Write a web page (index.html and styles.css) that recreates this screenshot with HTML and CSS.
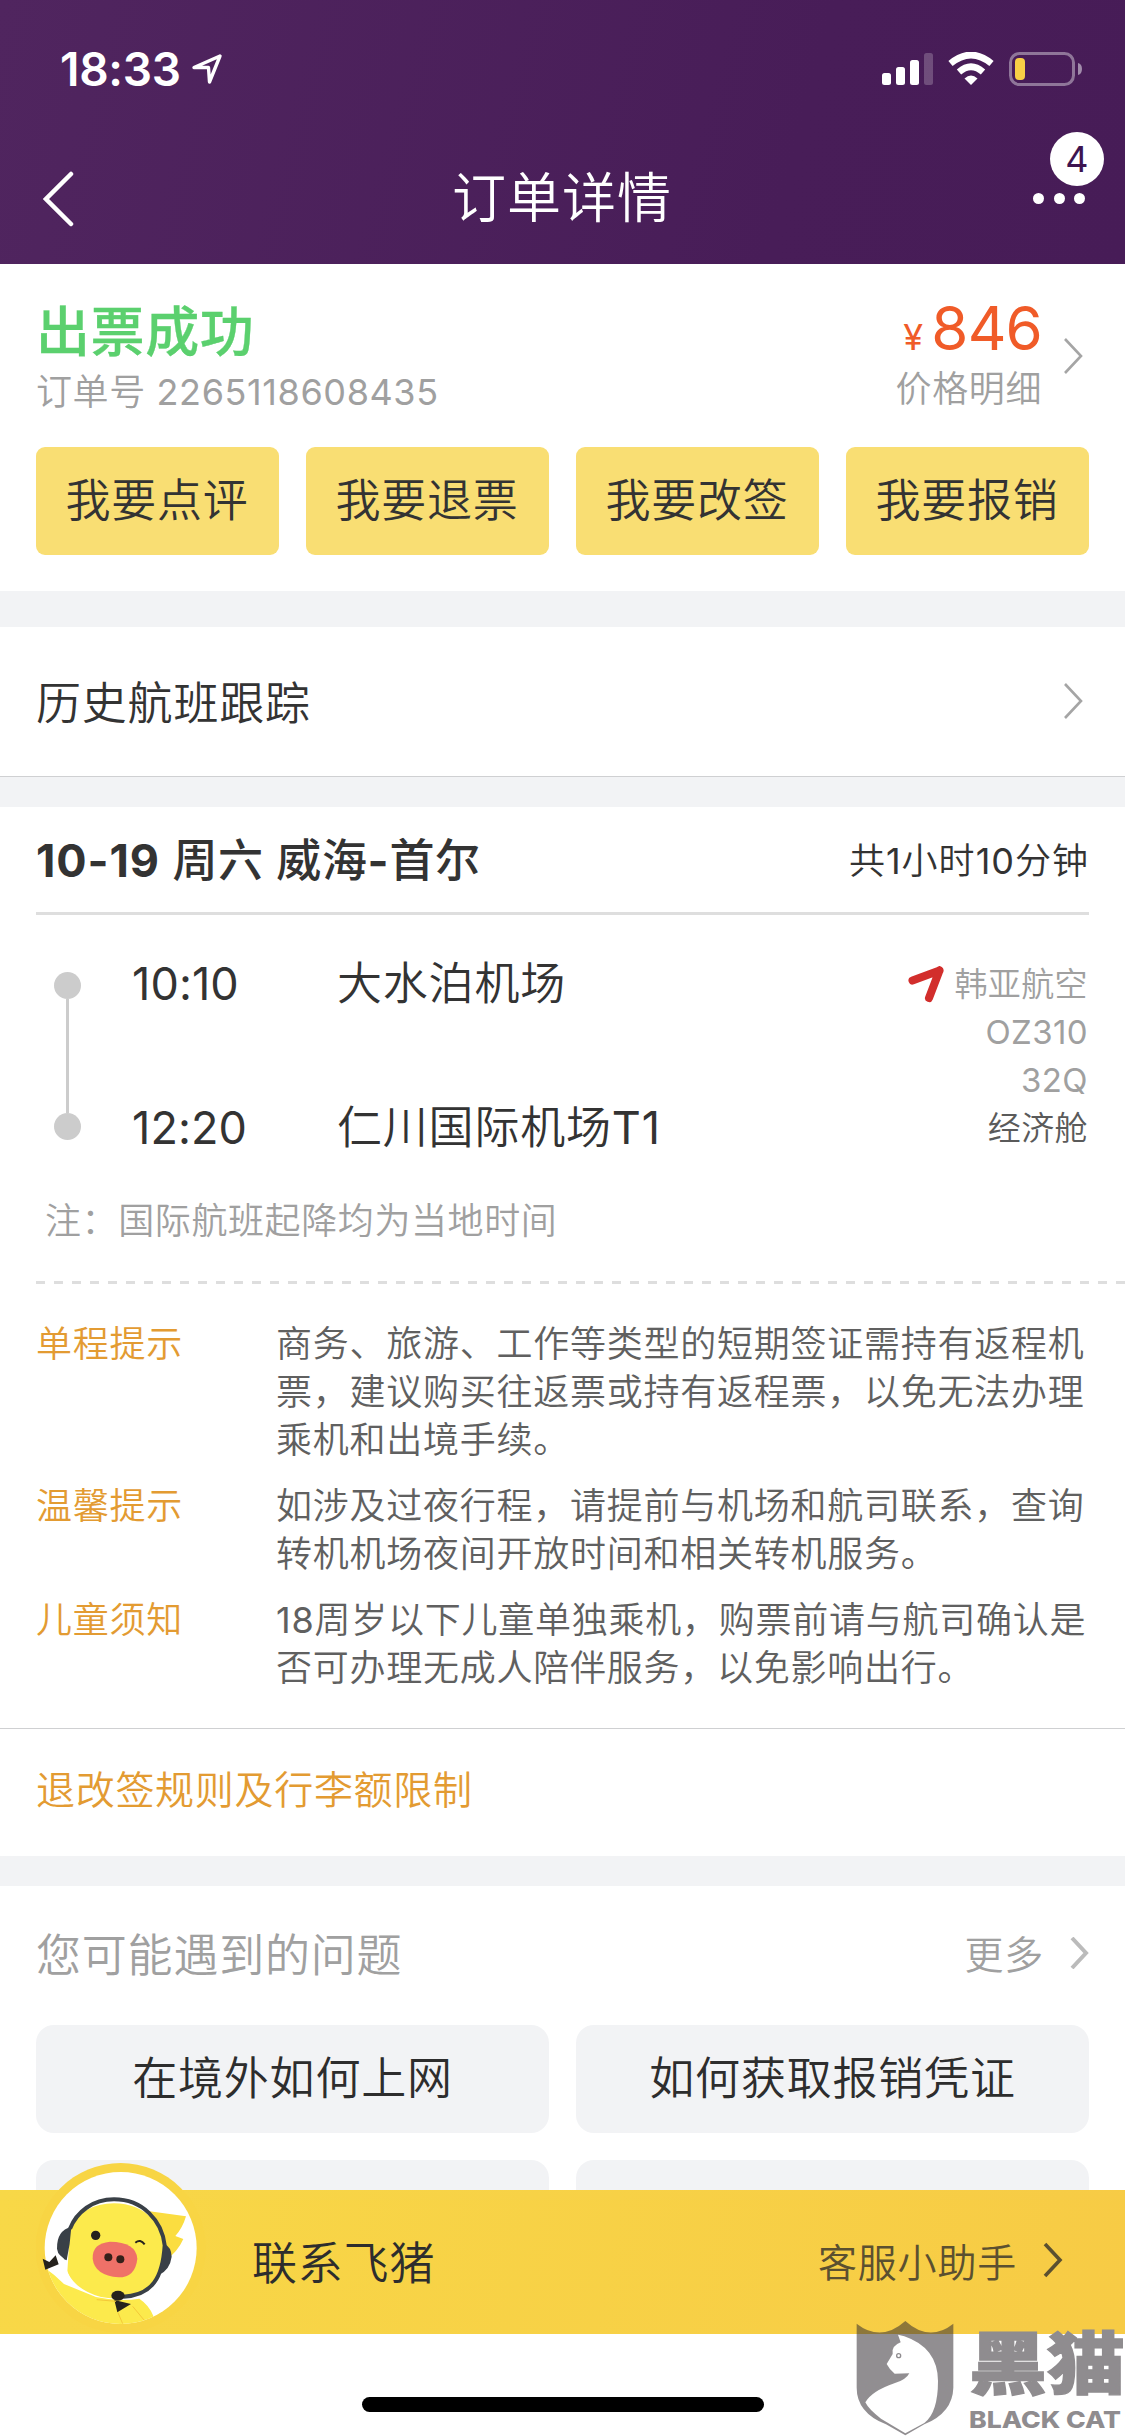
FILE: index.html
```html
<!DOCTYPE html>
<html lang="zh-CN">
<head>
<meta charset="utf-8">
<title>订单详情</title>
<link rel="stylesheet" href="styles.css">
</head>
<body>
<header class="header">
  <div class="status">
    <span class="clock">18:33</span>
    <svg class="loc" width="32" height="32" viewBox="0 0 32 32"><path d="M29 3 3 14.500H17.500L18.500 29Z" fill="none" stroke="#fff" stroke-width="3.400" stroke-linejoin="round"/></svg>
    <svg class="signals" width="202" height="36" viewBox="0 0 202 36">
      <g fill="#fff">
        <rect x="0" y="21" width="9" height="12" rx="2.500"/><rect x="14" y="15" width="9" height="18" rx="2.500"/><rect x="28" y="8" width="9" height="25" rx="2.500"/><rect x="42" y="1" width="9" height="32" rx="2.500" opacity=".22"/>
        <path d="M89 33 82.500 26.500Q89 20.500 95.500 26.500Z"/>
      </g>
      <g fill="none" stroke="#fff" stroke-width="6.600"><path d="M68.500 11.500Q89-5.500 109.500 11.500"/><path d="M77 20Q89 9.500 101 20"/></g>
      <rect x="128.500" y="1.500" width="63" height="31" rx="9" fill="none" stroke="#8f7699" stroke-width="3"/>
      <rect x="133" y="6" width="10" height="22" rx="4" fill="#f8cf46"/>
      <path d="M196 11Q200 12 200 17T196 23Z" fill="#a18cab"/>
    </svg>
  </div>
  <div class="nav">
    <svg class="back" width="32" height="56" viewBox="0 0 32 56"><path d="M28 3 3 28 28 53" fill="none" stroke="#fff" stroke-width="4.500" stroke-linecap="round"/></svg>
    <h1 class="title">订单详情</h1>
    <div class="menu"><i></i><i></i><i></i><span class="badge num">4</span></div>
  </div>
</header>

<section class="order">
  <div class="order-top">
    <div>
      <div class="state">出票成功</div>
      <div class="order-no">订单号 <span class="num">2265118608435</span></div>
    </div>
    <div class="price-box">
      <div class="price"><span class="yen">¥</span>846</div>
      <div class="price-label">价格明细</div>
    </div>
    <svg class="chev chev-price" width="20" height="36" viewBox="0 0 20 36"><path d="M2 1 18 18 2 35"/></svg>
  </div>
  <div class="actions"><a>我要点评</a><a>我要退票</a><a>我要改签</a><a>我要报销</a></div>
</section>

<section class="history">
  <span>历史航班跟踪</span>
  <svg class="chev" width="20" height="36" viewBox="0 0 20 36"><path d="M2 1 18 18 2 35"/></svg>
</section>

<section class="flight">
  <div class="flight-head">
    <h2><b>10-19</b> 周六 威海<b>-</b>首尔</h2>
    <span class="duration">共<span class="num">1</span>小时<span class="num">10</span>分钟</span>
  </div>
  <div class="route">
    <div class="rail"><i></i><b></b><i></i></div>
    <div class="stops">
      <div><span class="time num">10:10</span><span>大水泊机场</span></div>
      <div><span class="time num">12:20</span><span>仁川国际机场<span class="num">T1</span></span></div>
    </div>
    <div class="carrier">
      <div class="airline"><svg width="38" height="38" viewBox="0 0 38 38"><path d="M32.500 5.500 5.500 15.500M32.500 5.500 22 33" fill="none" stroke="#d22e2c" stroke-width="8" stroke-linecap="round" stroke-linejoin="round"/></svg><span>韩亚航空</span></div>
      <div class="num">OZ310</div>
      <div class="num">32Q</div>
      <div class="cabin">经济舱</div>
    </div>
  </div>
  <p class="note">注：国际航班起降均为当地时间</p>
  <div class="dashes"></div>
  <dl class="tips">
    <dt>单程提示</dt><dd>商务、旅游、工作等类型的短期签证需持有返程机<br>票，建议购买往返票或持有返程票，以免无法办理<br>乘机和出境手续。</dd>
    <dt>温馨提示</dt><dd>如涉及过夜行程，请提前与机场和航司联系，查询<br>转机机场夜间开放时间和相关转机服务。</dd>
    <dt>儿童须知</dt><dd><span class="num">18</span>周岁以下儿童单独乘机，购票前请与航司确认是<br>否可办理无成人陪伴服务，以免影响出行。</dd>
  </dl>
  <a class="rules">退改签规则及行李额限制</a>
</section>

<section class="faq">
  <div class="faq-head">
    <span>您可能遇到的问题</span><span class="more">更多</span>
    <svg class="chev chev-bold" width="19" height="32" viewBox="0 0 19 32"><path d="M2 1 16 16 2 31"/></svg>
  </div>
  <div class="faq-grid"><a>在境外如何上网</a><a>如何获取报销凭证</a><a></a><a></a></div>
</section>

<footer class="contact">
  <svg class="avatar" width="172" height="172" viewBox="0 0 516 516">
    <defs><clipPath id="face"><circle cx="254" cy="258" r="228"/></clipPath></defs>
    <circle cx="254" cy="258" r="255" fill="#f8d544"/>
    <circle cx="254" cy="258" r="228" fill="#fff"/>
    <g clip-path="url(#face)">
      <path d="M0 300Q50 330 84 366L180 405Q250 420 310 410Q340 430 352 462L330 516H0Z" fill="#fcea4c"/>
      <path d="M335 147 450 163Q440 198 418 222L442 231Q425 270 388 295Z" fill="#fbdd40"/>
    </g>
    <path d="M102 200Q140 125 234 124C330 124 384 190 382 270Q375 370 318 392Q260 418 195 405Q120 385 94 330Z" fill="#fcea4c"/>
    <path d="M102 200C122 150 170 112 234 112C320 112 378 176 386 250C380 345 350 400 262 404" fill="none" stroke="#394047" stroke-width="12"/>
    <path d="M106 195Q62 205 63 260Q67 286 92 295Q103 245 106 195ZM384 245Q406 254 407 284Q402 322 370 338Q380 290 384 245Z" fill="#394047"/>
    <path d="M64 272Q78 340 123 377Q92 342 84 290Z" fill="#fff"/>
    <path d="M20 290 40 300 59 280 68 307 28 323ZM235 414 285 426 244 451Z" fill="#25221d"/>
    <ellipse cx="246" cy="401" rx="20" ry="15" fill="#25221d"/>
    <circle cx="179" cy="220" r="14" fill="#25221d"/>
    <path d="M298 242Q313 230 326 247" fill="none" stroke="#25221d" stroke-width="6"/>
    <path d="M170 290Q168 244 222 239Q300 240 304 290Q298 346 248 346Q176 340 170 290Z" fill="#ef7168"/>
    <circle cx="217" cy="286" r="12" fill="#35201a"/><circle cx="253" cy="292" r="12" fill="#35201a"/>
    <path d="M182 413 240 418M290 433 324 474M246 452 260 485" stroke="#f4c838" stroke-width="3"/>
  </svg>
  <span class="contact-name">联系飞猪</span>
  <span class="helper">客服小助手</span>
  <svg class="chev chev-dark" width="22" height="36" viewBox="0 0 22 36"><path d="M3 2 18 18 3 34"/></svg>
</footer>
<div class="home"><i></i></div>

<div class="mark">
  <svg width="100" height="115" viewBox="0 0 300 345">
    <path fill-rule="evenodd" d="M2 8Q75 65 148 0Q220 65 292 8V200Q290 275 205 310L148 343 90 310Q2 275 2 200ZM134 64 126 41 145 46Q245 80 246 180Q246 275 205 306L148 337 75 293Q38 265 28 244Q48 210 115 187Q150 177 160 157L116 158Q100 145 92 129L110 99Q105 75 134 64Z"/>
    <circle cx="128" cy="104" r="6" fill="none" stroke="#8f8c8f" stroke-width="4"/>
  </svg>
  <div class="mark-text"><span class="mark-cn">黑猫</span><span class="mark-en">BLACK CAT</span></div>
</div>
</body>
</html>
```
FILE: styles.css
```css
* { box-sizing: border-box; }
body {
  position: relative;
  margin: 0;
  width: 1125px;
  height: 2436px;
  overflow: hidden;
  background: #f2f3f5;
  color: #333;
  font-family: Inter, "Noto Sans CJK SC", sans-serif;
  font-size: 45px;
  font-weight: 350;
  letter-spacing: .8px;
  display: flex;
  flex-direction: column;
}
h1, h2, p, dl, dd { margin: 0; font-weight: inherit; }
section { background: #fff; flex: none; }
i { display: block; }
svg { flex: none; display: block; }
.chev { fill: none; stroke: #a5a5a5; stroke-width: 2.6; }
.num { font-weight: 400; }

/* Header */
.header {
  flex: none;
  height: 264px;
  color: #fff;
  background: linear-gradient(105deg, #50255f, #481d58 70%, #471c57);
}
.status { display: flex; height: 138px; padding: 0 41px 0 60px; align-items: center; }
.clock { font-size: 46px; font-weight: 600; letter-spacing: -.3px; width: 130px; white-space: nowrap; }
.loc { margin-left: 1px; }
.signals { margin: 2px 0 0 auto; }
.nav { display: flex; height: 121px; align-items: center; justify-content: space-between; padding: 0 40px 0 43px; }
.back { width: 32px; }
.title { font-size: 54px; letter-spacing: 1px; margin: -8px 0 0 16px; }
.menu { position: relative; width: 52px; display: flex; justify-content: space-between; }
.menu i { width: 11px; height: 11px; border-radius: 50%; background: #fff; }
.badge {
  position: absolute;
  left: 17px;
  top: -61px;
  width: 54px;
  height: 54px;
  border-radius: 50%;
  background: #fff;
  color: #3d1450;
  font-size: 36px;
  line-height: 54px;
  letter-spacing: 0;
  text-align: center;
}

/* Order summary */
.order { height: 327px; margin-bottom: 36px; padding: 36px 36px 0; }
.order-top { display: flex; height: 147px; }
.state { font-size: 54px; line-height: 66px; height: 64px; font-weight: 500; color: #5bd06e; letter-spacing: .6px; -webkit-text-stroke: .3px #5bd06e; }
.order-no, .price-label { font-size: 36px; line-height: 56px; color: #a0a0a0; letter-spacing: .6px; }
.price-box { margin-left: auto; text-align: right; }
.price { font-size: 60px; line-height: 56px; height: 61px; color: #f05b28; letter-spacing: -.8px; font-weight: 400; }
.yen { font-size: 36px; margin-right: 9px; }
.chev-price { margin: 38px 6px 0 21px; }
.actions { display: flex; gap: 27px; }
.actions a {
  flex: 1;
  height: 108px;
  line-height: 108px;
  padding-right: 1px;
  text-align: center;
  border-radius: 9px;
  background: #f9de73;
}

/* Flight tracking row */
.history {
  height: 150px;
  margin-bottom: 30px;
  padding: 0 42px 2px 36px;
  display: flex;
  align-items: center;
  justify-content: space-between;
  border-bottom: 1px solid #cfd0d2;
}

/* Itinerary */
.flight { height: 1049px; margin-bottom: 30px; }
.flight-head {
  display: flex;
  height: 108px;
  margin: 0 36px;
  padding-bottom: 4px;
  align-items: center;
  justify-content: space-between;
  border-bottom: 3px solid #dedede;
}
.flight-head h2 { font-size: 45px; font-weight: 500; letter-spacing: .6px; }
.flight-head b { font-weight: 650; letter-spacing: .9px; }
.duration { font-size: 36px; letter-spacing: 1px; }
.route { display: flex; height: 264px; padding: 0 37px 0 54px; }
.rail { width: 27px; padding-top: 57px; display: flex; flex-direction: column; align-items: center; }
.rail i { width: 27px; height: 27px; border-radius: 50%; background: #ccc; }
.rail b { width: 3px; height: 114px; background: #ccc; }
.stops { margin-left: 51px; padding-top: 37px; line-height: 64px; }
.stops div { display: flex; height: 144px; }
.time { width: 205px; letter-spacing: .1px; }
.carrier { margin-left: auto; padding-top: 45px; text-align: right; font-size: 33px; line-height: 48px; color: #a0a0a0; letter-spacing: .4px; }
.airline { display: flex; align-items: center; gap: 9px; }
.cabin { color: #5a5a5a; }
.note { padding: 2px 0 0 45px; height: 102px; line-height: 80px; font-size: 36px; color: #a0a0a0; letter-spacing: .6px; }
.dashes { height: 3px; margin-left: 36px; background: repeating-linear-gradient(90deg, #dedede 0 9px, transparent 9px 18px); }
.tips {
  display: grid;
  grid-template-columns: 240px 1fr;
  row-gap: 18px;
  height: 444px;
  padding: 36px 0 0 36px;
  font-size: 36px;
  line-height: 48px;
  letter-spacing: .75px;
  align-content: start;
  white-space: nowrap;
}
.tips dt { color: #e39b32; }
.tips dd { color: #606060; }
.rules {
  display: block;
  height: 128px;
  padding-left: 36px;
  border-top: 1px solid #cfd0d2;
  font-size: 39px;
  line-height: 122px;
  letter-spacing: .7px;
  color: #e39b32;
}

/* Questions */
.faq { height: 304px; padding: 0 36px; overflow: hidden; }
.faq-head { display: flex; height: 139px; padding-bottom: 7px; align-items: center; color: #a0a0a0; }
.more { margin-left: auto; font-size: 39px; }
.chev-bold { margin: 1px 0 0 26px; stroke: #bbb; stroke-width: 4; }
.faq-grid { display: grid; grid-template-columns: 1fr 1fr; gap: 27px; }
.faq-grid a {
  height: 108px;
  line-height: 108px;
  border-radius: 18px;
  background: #f2f3f5;
  color: #2d2d2d;
  text-align: center;
}

/* Contact bar */
.contact {
  position: relative;
  flex: none;
  height: 144px;
  padding: 0 61px 4px 252px;
  display: flex;
  align-items: center;
  background: linear-gradient(100deg, #f8d847, #f7cb45);
  color: #2d2d2d;
}
.avatar { position: absolute; left: 36px; top: -28px; }
.helper { margin-left: auto; font-size: 39px; color: #5b5030; }
.chev-dark { margin-left: 25px; stroke: #5b5030; stroke-width: 3.6; }
.home { flex: 1; background: #fff; padding-top: 63px; }
.home i { width: 402px; height: 15px; margin: 0 auto; border-radius: 8px; background: #000; }

/* Watermark */
.mark { position: absolute; left: 856px; top: 2321px; display: flex; color: #8f8c8f; }
.mark svg { fill: rgba(48, 42, 48, .53); }
.mark-text { display: flex; flex-direction: column; margin-left: 13px; letter-spacing: 0; }
.mark-cn { font-weight: 900; font-size: 78px; line-height: 86px; height: 88px; white-space: nowrap; -webkit-text-stroke: 1.5px #8f8c8f; transform: scaleY(.88); }
.mark-en { font-weight: 800; font-size: 23px; line-height: 23px; white-space: nowrap; transform: scaleX(1.155); transform-origin: left; }
```
